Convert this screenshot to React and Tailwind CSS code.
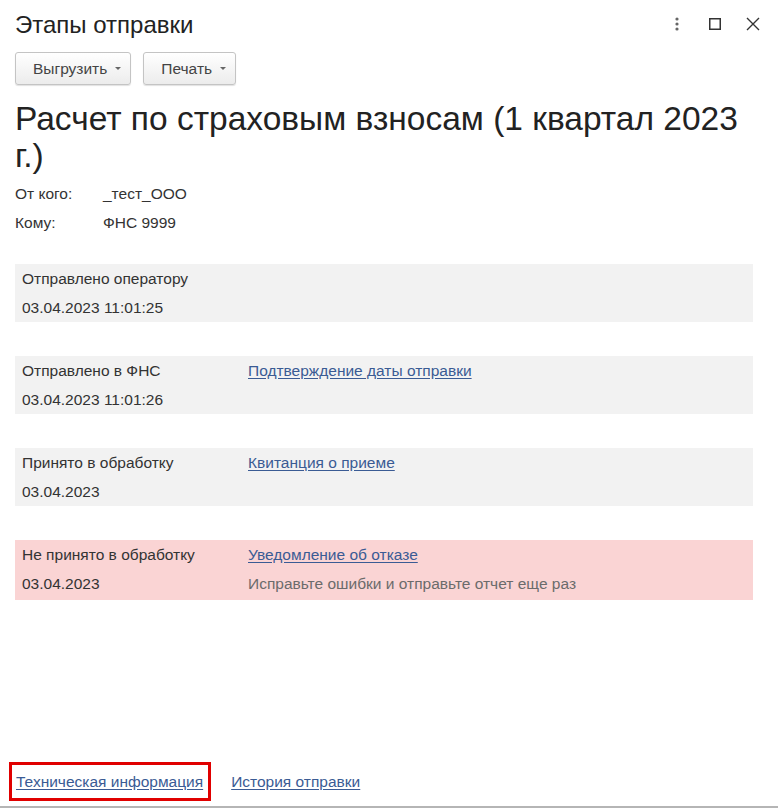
import React from "react";

const font = { fontFamily: '"Liberation Sans", Arial, sans-serif' };

function Btn({ children }) {
  return (
    <div className="h-[33px] flex items-center pl-[17px] pr-[9px] border border-[#c4c4c4] rounded-[3px] bg-gradient-to-b from-white to-[#ececec] shadow-[0_1px_1px_rgba(0,0,0,0.12)] text-[15.5px] text-[#444]">
      <span>{children}</span>
      <span className="ml-[8px] w-0 h-0 border-l-[3px] border-r-[3px] border-t-[3px] border-l-transparent border-r-transparent border-t-[#666]"></span>
    </div>
  );
}

function Row({ label, date, link, note, pink }) {
  return (
    <div className={`ml-[15px] mr-[25px] flex pl-[7px] pt-[5px] text-[15.5px] text-[#333] ${pink ? "bg-[#fad4d4] h-[60px]" : "bg-[#f2f2f2] h-[58px]"}`}>
      <div className="w-[226px] flex flex-col">
        <div className="h-[19px] leading-[19px]">{label}</div>
        <div className="h-[19px] leading-[19px] mt-[10px]">{date}</div>
      </div>
      <div className="flex flex-col">
        {link && <div className="h-[19px] leading-[19px] text-[#3a5b94] underline underline-offset-2">{link}</div>}
        {note && <div className="h-[19px] leading-[19px] mt-[10px] text-[#6b6b6b]">{note}</div>}
      </div>
    </div>
  );
}

export default function App() {
  return (
    <div style={font} className="w-[778px] h-[808px] bg-white flex flex-col relative overflow-hidden">
      <div className="flex items-center h-[48px] pl-[15px] pr-[18px]">
        <div className="text-[24px] text-[#222] leading-none pt-[1px]">Этапы отправки</div>
        <div className="ml-auto flex items-center">
          <svg width="6" height="14" viewBox="0 0 6 14" className="mr-[29px]">
            <circle cx="3" cy="2" r="1.6" fill="#666" />
            <circle cx="3" cy="7" r="1.6" fill="#666" />
            <circle cx="3" cy="12" r="1.6" fill="#666" />
          </svg>
          <svg width="12" height="12" viewBox="0 0 12 12" className="mr-[25px]">
            <rect x="0.75" y="0.75" width="10.5" height="10.5" fill="none" stroke="#333" strokeWidth="1.5" />
          </svg>
          <svg width="14" height="14" viewBox="0 0 14 14">
            <path d="M1 1 L13 13 M13 1 L1 13" stroke="#333" strokeWidth="1.4" />
          </svg>
        </div>
      </div>
      <div className="flex gap-[12px] pl-[15px] mt-[4px]">
        <Btn>Выгрузить</Btn>
        <Btn>Печать</Btn>
      </div>
      <div className="pl-[15px] pr-[25px] mt-[15px] text-[33.5px] leading-[37px] text-[#222]">
        Расчет по страховым взносам (1 квартал 2023 г.)
      </div>
      <div className="px-[15px] mt-[11px] text-[15.5px] text-[#333]">
        <div className="flex h-[29px] leading-[18px]"><span className="w-[88px]">От кого:</span><span>_тест_ООО</span></div>
        <div className="flex h-[29px] leading-[18px]"><span className="w-[88px]">Кому:</span><span>ФНС 9999</span></div>
      </div>
      <div className="flex flex-col gap-[34px] mt-[21px]">
        <Row label="Отправлено оператору" date="03.04.2023 11:01:25" />
        <Row label="Отправлено в ФНС" date="03.04.2023 11:01:26" link="Подтверждение даты отправки" />
        <Row label="Принято в обработку" date="03.04.2023" link="Квитанция о приеме" />
        <Row label="Не принято в обработку" date="03.04.2023" link="Уведомление об отказе" note="Исправьте ошибки и отправьте отчет еще раз" pink />
      </div>
      <div className="mt-auto flex items-center pl-[9px] pb-[5px] text-[15.5px]">
        <div className="border-[3px] border-[#e00000] h-[39px] flex items-center pl-[4px] pr-[5px]">
          <span className="text-[#3a5b94] underline underline-offset-2">Техническая информация</span>
        </div>
        <span className="ml-[20px] text-[#3a5b94] underline underline-offset-2">История отправки</span>
      </div>
      <div className="h-[2px] bg-[#b5b5b5]"></div>
    </div>
  );
}
